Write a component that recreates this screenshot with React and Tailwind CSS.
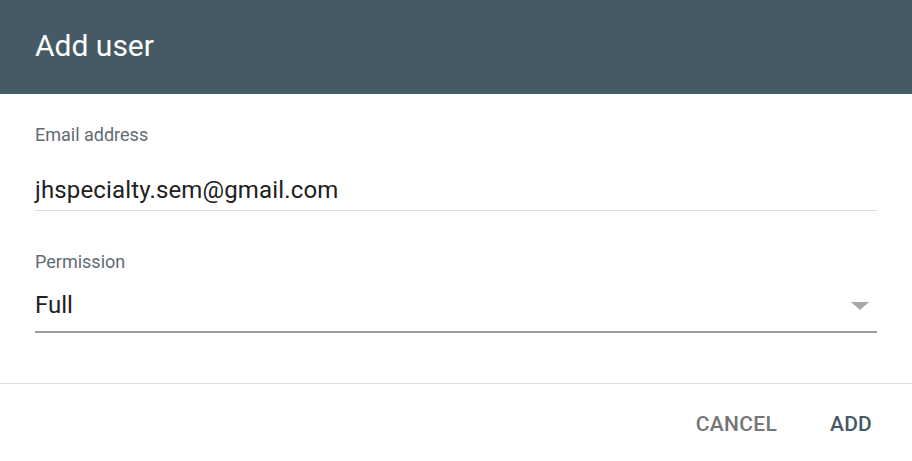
import React from 'react';

export default function App() {
  return (
    <div className="w-[912px] h-[461px] bg-white flex flex-col font-['Roboto',sans-serif]">
      <div className="h-[94px] bg-[#455a64] px-[35px] pt-[31px] shrink-0">
        <h1 className="text-[30px] text-white leading-none">Add user</h1>
      </div>

      <div className="px-[35px] pt-[31px] flex-1">
        <label className="block text-[18px] leading-[20px] text-[#5f6b73]">Email address</label>
        <div className="mt-[31px] border-b border-[#dcdcdc] pb-[6px]">
          <div className="text-[24px] leading-[28px] tracking-[0.15px] text-[#212121]">jhspecialty.sem@gmail.com</div>
        </div>

        <label className="block mt-[41px] text-[18px] leading-[20px] text-[#5f6b73]">Permission</label>
        <div className="mt-[19px] border-b-2 border-[#9e9e9e] pb-[12px] flex items-center justify-between">
          <div className="text-[24px] leading-[28px] text-[#212121]">Full</div>
          <svg width="18" height="8" viewBox="0 0 18 8" className="mr-[8px] mt-[2px]">
            <polygon points="0,0 18,0 9,8" fill="#a8a8a8" />
          </svg>
        </div>
      </div>

      <div className="border-t border-[#e0e0e0] h-[78px] flex items-start justify-end gap-[53px] pr-[40px] pt-[30px] shrink-0">
        <button className="text-[21px] leading-[21px] font-medium tracking-[0.3px] text-[#757575]">CANCEL</button>
        <button className="text-[21px] leading-[21px] font-medium tracking-[0.2px] text-[#455a64]">ADD</button>
      </div>
    </div>
  );
}
